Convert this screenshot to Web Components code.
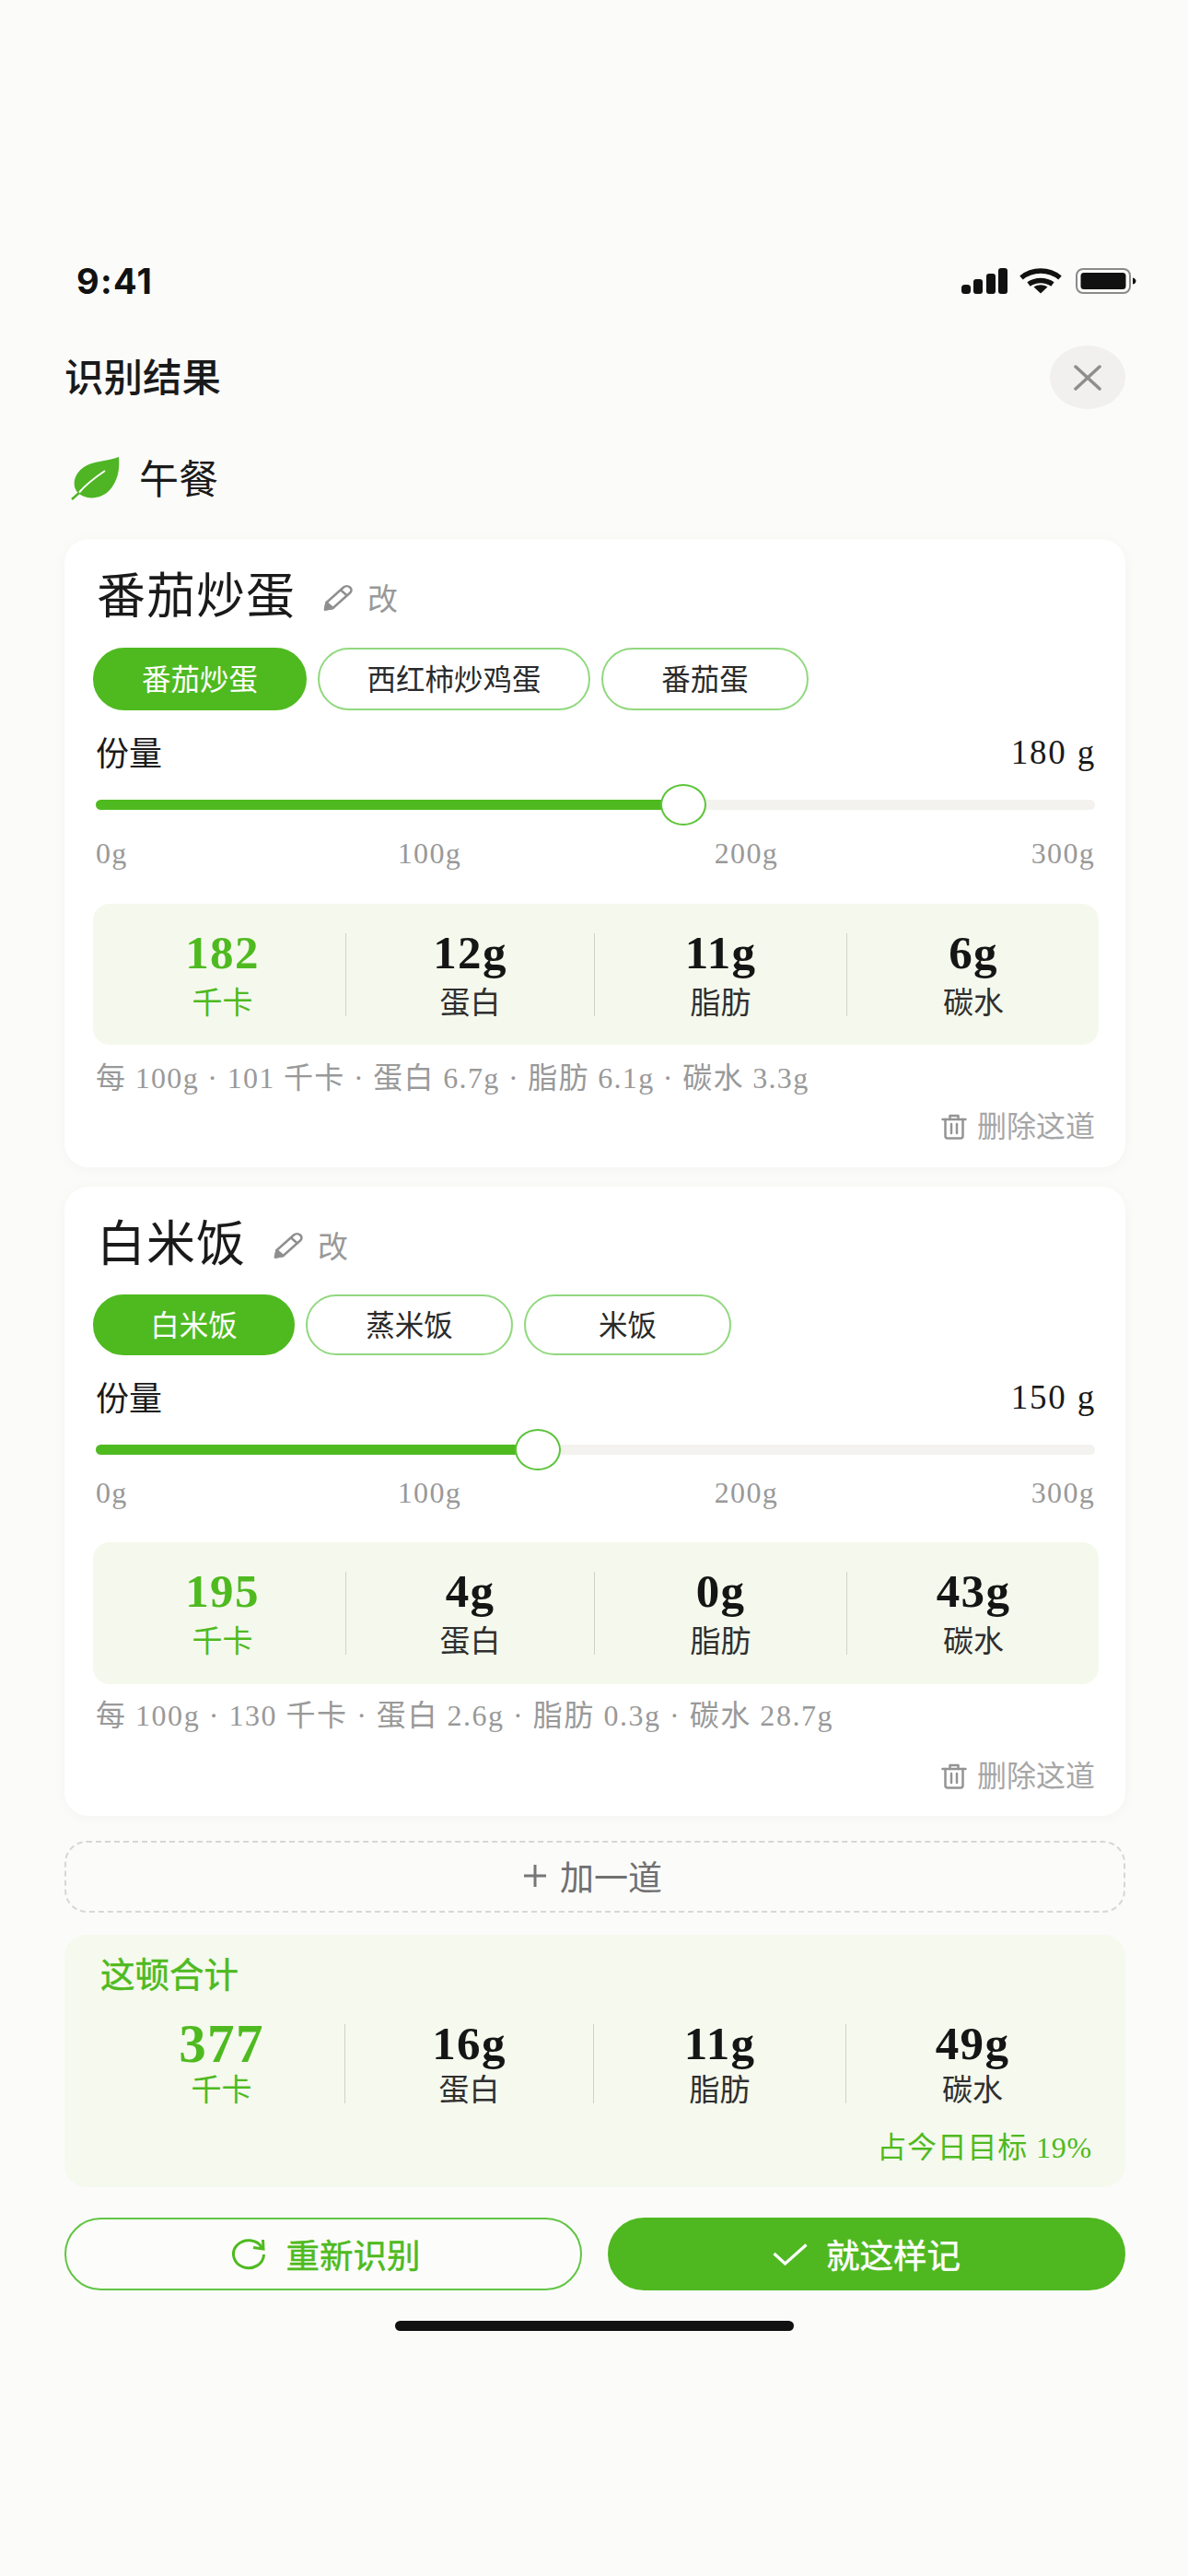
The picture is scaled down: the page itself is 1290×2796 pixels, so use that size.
<!DOCTYPE html>
<html lang="zh-CN">
<head>
<meta charset="utf-8">
<title>识别结果</title>
<style>
    html, body { margin: 0; padding: 0; }
    body {
        width: 1290px;
        height: 2796px;
        overflow: hidden;
        background: #fbfbfa;
        --serif: "Liberation Serif", "Noto Sans CJK SC", serif;
        --sans: "Noto Sans CJK SC", "Inter", sans-serif;
        --green: #4fba20;
        font-family: var(--serif);
        color: #1a1a1a;
    }
    .page {
        display: flex;
        flex-direction: column;
        padding: 280px 68px 0 70px;
    }
</style>
</head>
<body>
<div class="page">
    <status-bar></status-bar>
    <sheet-header title="识别结果"></sheet-header>
    <meal-tag label="午餐"></meal-tag>

    <dish-card name="番茄炒蛋" per="每 100g · 101 千卡 · 蛋白 6.7g · 脂肪 6.1g · 碳水 3.3g" style="margin-top:42px;--chips-mt:22px;--chip-h:68px;--tick-mt:13px;--panel-mt:38px;--panel-h:153px;--per-mt:16px;--per-ls:1.33px;--del-mt:13px;--card-pb:24px">
        <choice-chip slot="chips" active style="--w:232px">番茄炒蛋</choice-chip>
        <choice-chip slot="chips" style="--w:296px">西红柿炒鸡蛋</choice-chip>
        <choice-chip slot="chips" style="--w:225px">番茄蛋</choice-chip>
        <portion-slider slot="slider" value="180 g" pos="58.8"></portion-slider>
        <macro-panel slot="macros" kcal="182" protein="12g" fat="11g" carbs="6g"></macro-panel>
    </dish-card>

    <dish-card name="白米饭" per="每 100g · 130 千卡 · 蛋白 2.6g · 脂肪 0.3g · 碳水 28.7g" style="margin-top:21px;--chips-mt:21px;--chip-h:66px;--tick-mt:7px;--panel-mt:37px;--panel-h:154px;--per-mt:14px;--per-ls:1.53px;--del-mt:26px;--card-pb:23px">
        <choice-chip slot="chips" active style="--w:219px">白米饭</choice-chip>
        <choice-chip slot="chips" style="--w:225px">蒸米饭</choice-chip>
        <choice-chip slot="chips" style="--w:225px">米饭</choice-chip>
        <portion-slider slot="slider" value="150 g" pos="44.2"></portion-slider>
        <macro-panel slot="macros" kcal="195" protein="4g" fat="0g" carbs="43g"></macro-panel>
    </dish-card>

    <add-row>加一道</add-row>
    <meal-summary kcal="377" protein="16g" fat="11g" carbs="49g" goal="占今日目标 19%"></meal-summary>

    <div style="display:flex;justify-content:space-between;margin-top:33px">
        <action-button icon="refresh">重新识别</action-button>
        <action-button icon="check" primary>就这样记</action-button>
    </div>
    <home-bar></home-bar>
</div>

<script>
class StatusBar extends HTMLElement {
    constructor() {
        super();
        const shadowRoot = this.attachShadow({mode: "open"});
        shadowRoot.innerHTML = `
        <style>
            :host { display: flex; align-items: center; justify-content: space-between; height: 50px; }
            .time { margin-left: 13px; font: 700 38px/50px "Inter", sans-serif; color: #111; letter-spacing: 1.3px; }
            .icons { display: flex; align-items: center; gap: 13px; margin-right: -12px; }
            .wifi { margin-right: 2px; }
            svg { display: block; }
        </style>
        <span class="time">9:41</span>
        <div class="icons">
            <svg width="50" height="28" viewBox="0 0 50 28" fill="#111">
                <rect x="0" y="18" width="10" height="10" rx="3.500"/>
                <rect x="13" y="12" width="10" height="16" rx="3"/>
                <rect x="27" y="6" width="10" height="22" rx="3"/>
                <rect x="40" y="0" width="10" height="28" rx="3"/>
            </svg>
            <svg class="wifi" width="46" height="28" viewBox="0 0 46 28" fill="none" stroke="#111" stroke-width="5.500">
                <path d="M2 10.500C14 .6 32 .6 44 10.500"/>
                <path d="M10 17.500C17.500 12 28.500 12 36 17.500"/>
                <path d="M15.500 20.500L23 27.500L30.500 20.500C26 17.500 20 17.500 15.500 20.500Z" fill="#111" stroke="none"/>
            </svg>
            <svg width="66" height="28" viewBox="0 0 66 28">
                <rect x="1" y="1" width="58" height="26" rx="7" fill="none" stroke="#8a8a8a" stroke-width="2"/>
                <rect x="5.500" y="5" width="49" height="18" rx="3.500" fill="#111"/>
                <path d="M62 10.500c2.500.5 3.500 2 3.500 3.500s-1 3-3.500 3.500z" fill="#111"/>
            </svg>
        </div>`;
    }
}

class SheetHeader extends HTMLElement {
    constructor() {
        super();
        const shadowRoot = this.attachShadow({mode: "open"});
        shadowRoot.innerHTML = `
        <style>
            :host { display: flex; align-items: center; justify-content: space-between; height: 69px; margin-top: 45px; }
            .title { font: 500 42.500px/63px var(--sans); padding-bottom: 6px; color: #1a1a1a; }
            .close { width: 82px; height: 69px; border-radius: 50%; background: #f1f0ee; display: flex; align-items: center; justify-content: center; }
        </style>
        <span class="title">${this.getAttribute("title")}</span>
        <div class="close">
            <svg width="30" height="28" viewBox="0 0 30 28" fill="none" stroke="#8e8e8e" stroke-width="3.500" stroke-linecap="round">
                <path d="M2 2L28 26M28 2L2 26"/>
            </svg>
        </div>`;
    }
}

class MealTag extends HTMLElement {
    constructor() {
        super();
        const shadowRoot = this.attachShadow({mode: "open"});
        shadowRoot.innerHTML = `
        <style>
            :host { display: flex; align-items: center; height: 48px; margin-top: 51px; padding-left: 7px; }
            svg { display: block; margin-right: 21px; }
            span { font-size: 43px; line-height: 48px; padding-top: 6px; color: #1a1a1a; }
        </style>
        <svg width="53" height="48" viewBox="0 0 53 48">
            <path d="M52 1C40 6 24 5 14 12C4 19 1 30 6 38C14 48 32 48 42 37C52 26 53 12 52 1Z" fill="#4fb524"/>
            <path d="M1 47L10 39" stroke="#4fb524" stroke-width="2.500" fill="none"/>
            <path d="M9 39.500C17 30 25 24 37 16" stroke="#fff" stroke-width="2" fill="none"/>
        </svg>
        <span>${this.getAttribute("label")}</span>`;
    }
}

class DishCard extends HTMLElement {
    constructor() {
        super();
        const shadowRoot = this.attachShadow({mode: "open"});
        shadowRoot.innerHTML = `
        <style>
            :host {
                display: block;
                background: #fff;
                border-radius: 26px;
                box-shadow: 0 2px 14px rgba(60, 60, 40, .035);
                padding: 30px 29px var(--card-pb) 31px;
            }
            .head { display: flex; align-items: center; height: 66px; padding-left: 4px; }
            .name { font-size: 53px; line-height: 66px; letter-spacing: 1px; color: #1a1a1a; }
            .edit { display: flex; align-items: center; margin-left: 30px; color: #999; font-size: 33px; gap: 15px; }
            .chips { display: flex; gap: 12px; margin-top: var(--chips-mt); }
            .per { margin: var(--per-mt) 0 0 3px; font-size: 32px; line-height: 40px; letter-spacing: var(--per-ls); color: #999; white-space: nowrap; }
            .del { display: flex; align-items: center; justify-content: flex-end; gap: 11px; margin: var(--del-mt) 4px 0 0; font-size: 32px; line-height: 40px; color: #a6a6a6; }
            svg { display: block; }
        </style>
        <div class="head">
            <span class="name">${this.getAttribute("name")}</span>
            <span class="edit">
                <svg width="33" height="29" viewBox="0 0 33 29" fill="none" stroke="#8f8f8f" stroke-width="2.500" stroke-linejoin="round">
                    <path d="M2 27.500L3.500 20L22 3.500C24 1.800 27 1.800 29 3.500C31 5.300 31 8 29 9.500L10.500 26Z"/>
                    <path d="M19 6.500L26.500 13"/>
                    <path d="M2 27.500L3.500 20L10.500 26Z" fill="#8f8f8f"/>
                </svg>
                <span>改</span>
            </span>
        </div>
        <div class="chips"><slot name="chips"></slot></div>
        <slot name="slider"></slot>
        <slot name="macros"></slot>
        <div class="per">${this.getAttribute("per")}</div>
        <div class="del">
            <svg width="28" height="28" viewBox="0 0 28 28" fill="none" stroke="#949494" stroke-width="2.500" stroke-linecap="round" stroke-linejoin="round">
                <path d="M1.500 6H26.500"/>
                <path d="M9.500 6V2H18.500V6"/>
                <path d="M4.500 6V24C4.500 25.500 5.500 26.500 7 26.500H21C22.500 26.500 23.500 25.500 23.500 24V6"/>
                <path d="M11 11V21M17 11V21"/>
            </svg>
            <span>删除这道</span>
        </div>`;
    }
}

class ChoiceChip extends HTMLElement {
    constructor() {
        super();
        const shadowRoot = this.attachShadow({mode: "open"});
        shadowRoot.innerHTML = `
        <style>
            :host {
                display: flex;
                align-items: center;
                justify-content: center;
                box-sizing: border-box;
                width: var(--w);
                height: var(--chip-h);
                padding-bottom: 4px;
                border-radius: 34px;
                border: 2px solid #91d87f;
                background: #fff;
                font-size: 31.500px;
                color: #2a2a2a;
            }
            :host([active]) { background: var(--green); border-color: var(--green); color: #fff; }
        </style>
        <slot></slot>`;
    }
}

class PortionSlider extends HTMLElement {
    constructor() {
        super();
        const pos = this.getAttribute("pos");
        const shadowRoot = this.attachShadow({mode: "open"});
        shadowRoot.innerHTML = `
        <style>
            :host { display: block; margin: 26px 4px 0 3px; }
            .row { display: flex; justify-content: space-between; font-size: 36px; line-height: 40px; color: #1a1a1a; }
            .row span:first-child { padding-top: 2px; margin-bottom: -2px; }
            .val { font-size: 37px; letter-spacing: 1.800px; margin-right: -1px; }
            .track { position: relative; display: flex; align-items: center; height: 45px; margin-top: 14px; }
            .bar { width: 100%; height: 11px; border-radius: 6px; background: #f3f2ef; overflow: hidden; }
            .fill { height: 100%; width: ${pos}%; background: var(--green); }
            .knob {
                position: absolute;
                left: ${pos}%;
                top: 0;
                box-sizing: border-box;
                width: 50px;
                height: 45px;
                margin-left: -25px;
                border-radius: 50%;
                border: 2px solid #5cc43a;
                background: #fff;
            }
            .ticks { display: flex; justify-content: space-between; margin-top: var(--tick-mt); font-size: 32px; line-height: 34px; letter-spacing: 1.300px; color: #999; }
            .ticks span:first-child { min-width: 53px; }
        </style>
        <div class="row"><span>份量</span><span class="val">${this.getAttribute("value")}</span></div>
        <div class="track"><div class="bar"><div class="fill"></div></div><div class="knob"></div></div>
        <div class="ticks"><span>0g</span><span>100g</span><span>200g</span><span>300g</span></div>`;
    }
}

// the same four columns are used inside each dish card and in the total
const macroColumns = (el) => `
    <div class="col kcal"><b>${el.getAttribute("kcal")}</b><span>千卡</span></div>
    <div class="col"><b>${el.getAttribute("protein")}</b><span>蛋白</span></div>
    <div class="col"><b>${el.getAttribute("fat")}</b><span>脂肪</span></div>
    <div class="col"><b>${el.getAttribute("carbs")}</b><span>碳水</span></div>`;

const macroStyles = `
    .grid { display: grid; grid-template-columns: 274px 270px 274px 275px; }
    .col { display: flex; flex-direction: column; align-items: center; height: var(--col-h); border-left: 1px solid #cfd2c8; }
    .col:first-child { border-left: 0; padding-left: 7px; }
    .col b { font-size: 51px; line-height: 40px; padding-top: 1px; margin-bottom: -1px; font-weight: 700; color: #151515; letter-spacing: 1.300px; }
    .col span { margin-top: var(--label-mt); font-size: 33px; line-height: 30px; color: #2f2f2f; }
    .kcal b, .kcal span { color: var(--green); }`;

class MacroPanel extends HTMLElement {
    constructor() {
        super();
        const shadowRoot = this.attachShadow({mode: "open"});
        shadowRoot.innerHTML = `
        <style>
            :host {
                display: flex;
                align-items: center;
                height: var(--panel-h);
                margin-top: var(--panel-mt);
                border-radius: 18px;
                background: #f5f9ed;
                --col-h: 90px;
                --label-mt: 21px;
            }
            ${macroStyles}
        </style>
        <div class="grid">${macroColumns(this)}</div>`;
    }
}

class AddRow extends HTMLElement {
    constructor() {
        super();
        const shadowRoot = this.attachShadow({mode: "open"});
        shadowRoot.innerHTML = `
        <style>
            :host {
                display: flex;
                align-items: center;
                justify-content: center;
                gap: 15px;
                box-sizing: border-box;
                height: 78px;
                margin-top: 27px;
                padding-bottom: 3px;
                border: 2px dashed #d7d7d7;
                border-radius: 24px;
                font-size: 37px;
                color: #707070;
            }
            svg { display: block; margin-left: -4px; }
        </style>
        <svg width="24" height="24" viewBox="0 0 24 24" stroke="#777" stroke-width="3" fill="none"><path d="M0 12H24M12 0V24"/></svg>
        <span><slot></slot></span>`;
    }
}

class MealSummary extends HTMLElement {
    constructor() {
        super();
        const shadowRoot = this.attachShadow({mode: "open"});
        shadowRoot.innerHTML = `
        <style>
            :host {
                display: block;
                margin-top: 24px;
                padding: 25px 29px 25px 30px;
                border-radius: 24px;
                background: #f5f9ee;
                --col-h: 86px;
                --label-mt: 17px;
            }
            .title { margin-left: 9px; padding-top: 3px; font-size: 37.500px; line-height: 33px; -webkit-text-stroke: .5px currentColor; color: var(--green); }
            .grid-wrap { margin-top: 36px; }
            ${macroStyles}
            .kcal b { font-size: 59px; }
            .goal { margin: 30px 7px 0 0; text-align: right; font-size: 32px; line-height: 36px; letter-spacing: .8px; color: var(--green); }
        </style>
        <div class="title">这顿合计</div>
        <div class="grid-wrap"><div class="grid">${macroColumns(this)}</div></div>
        <div class="goal">${this.getAttribute("goal")}</div>`;
    }
}

class ActionButton extends HTMLElement {
    static icons = {
        refresh: `<svg width="38" height="34" viewBox="0 0 38 34" fill="none" stroke="#4fba20" stroke-width="3">
                <path d="M33.500 9.500A16.500 15 0 1 0 35.500 17"/>
                <path d="M24 9.500L35 11L34.500 1" stroke-linejoin="miter"/>
            </svg>`,
        check: `<svg width="38" height="24" viewBox="0 0 38 24" fill="none" stroke="#fff" stroke-width="3.200">
                <path d="M1.500 11L13.500 22L36.500 1.500"/>
            </svg>`
    };

    constructor() {
        super();
        const shadowRoot = this.attachShadow({mode: "open"});
        shadowRoot.innerHTML = `
        <style>
            :host {
                display: flex;
                align-items: center;
                justify-content: center;
                gap: 22px;
                box-sizing: border-box;
                width: 562px;
                height: 79px;
                padding-left: 5px;
                border: 2.500px solid #62c544;
                border-radius: 40px;
                background: #fcfdfb;
                font-size: 36.500px;
                color: var(--green);
            }
            :host([primary]) { gap: 20px; padding-left: 0; background: #4fb820; border-color: #4fb820; color: #fff; }
            span { -webkit-text-stroke: .5px currentColor; }
            svg { display: block; }
        </style>
        ${ActionButton.icons[this.getAttribute("icon")]}
        <span><slot></slot></span>`;
    }
}

class HomeBar extends HTMLElement {
    constructor() {
        super();
        const shadowRoot = this.attachShadow({mode: "open"});
        shadowRoot.innerHTML = `
        <style>
            :host { display: block; width: 433px; height: 11px; margin: 33px 0 0 359px; border-radius: 6px; background: #111; }
        </style>`;
    }
}

customElements.define("status-bar", StatusBar);
customElements.define("sheet-header", SheetHeader);
customElements.define("meal-tag", MealTag);
customElements.define("dish-card", DishCard);
customElements.define("choice-chip", ChoiceChip);
customElements.define("portion-slider", PortionSlider);
customElements.define("macro-panel", MacroPanel);
customElements.define("add-row", AddRow);
customElements.define("meal-summary", MealSummary);
customElements.define("action-button", ActionButton);
customElements.define("home-bar", HomeBar);
</script>
</body>
</html>
